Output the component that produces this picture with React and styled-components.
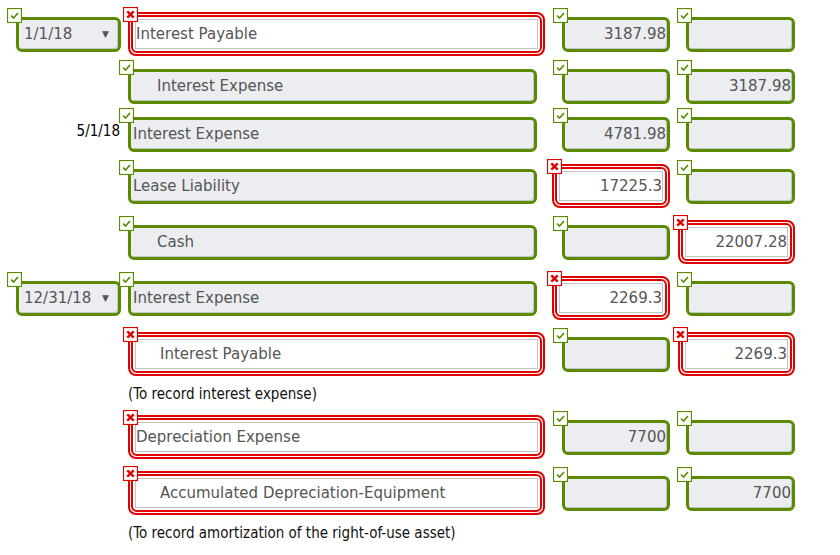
import React from 'react';
import styled, { createGlobalStyle } from 'styled-components';

const GREEN = '#5a8a00';
const RED = '#e10000';

const GlobalStyle = createGlobalStyle`
  body {
    margin: 0;
    background: #fff;
    font-family: "DejaVu Sans", Verdana, sans-serif;
  }
`;

const Sheet = styled.div`
  width: 840px;
  box-sizing: border-box;
  padding: 6px 0 0 16px;
`;

const Row = styled.div`
  display: grid;
  grid-template-columns: 105px 417px 118px 118px;
  column-gap: 7px;
  align-items: center;
  height: ${p => (p.$tall ? 56 : 48)}px;
`;

const Cell = styled.div`
  display: flex;
  align-items: center;
  justify-content: ${p => (p.$right ? 'flex-end' : 'flex-start')};
`;

const Slot = styled.div`
  position: relative;
  flex: none;
`;

const GoodBox = styled.div`
  box-sizing: border-box;
  width: ${p => p.$w}px;
  height: 35px;
  border: 3px solid ${GREEN};
  border-radius: 6px;
  background: #ebedf0;
  box-shadow: inset -1px -1px 0 #c4c6c9;
  display: flex;
  align-items: center;
  justify-content: ${p => (p.$right ? 'flex-end' : 'flex-start')};
  padding: ${p => (p.$right ? '0 1px 0 0' : `0 0 0 ${p.$indent ? 26 : 2}px`)};
`;

const BadOuter = styled.div`
  box-sizing: border-box;
  width: ${p => p.$w}px;
  height: 44px;
  border: 2px solid ${RED};
  border-radius: 8px;
  padding: 1px;
  background: #fff;
`;

const BadInner = styled.div`
  box-sizing: border-box;
  height: 100%;
  border: 2px solid ${RED};
  border-radius: 6px;
  padding: 2px;
  background: #fff;
`;

const BadBox = styled.div`
  box-sizing: border-box;
  height: 100%;
  border: 1px solid #c3c3c3;
  background: #fff;
  display: flex;
  align-items: center;
  justify-content: ${p => (p.$right ? 'flex-end' : 'flex-start')};
  padding: ${p => (p.$right ? '0' : `0 0 0 ${p.$indent ? 24 : 0}px`)};
`;

const Value = styled.span`
  font-size: 15px;
  color: #555;
  white-space: nowrap;
`;

const Mark = styled.svg`
  position: absolute;
  left: ${p => p.$off}px;
  top: ${p => p.$off}px;
  width: 15px;
  height: 15px;
  z-index: 1;
`;

const DateBox = styled.div`
  box-sizing: border-box;
  width: 105px;
  height: 35px;
  border: 3px solid ${GREEN};
  border-radius: 6px;
  background: #ebedf0;
  box-shadow: inset -1px -1px 0 #c4c6c9;
  display: flex;
  align-items: center;
  justify-content: space-between;
  padding: 0 9px 0 5px;
`;

const Arrow = styled.span`
  font-size: 9px;
  color: #555;
`;

const DateLabel = styled.span`
  font-family: "DejaVu Sans Condensed", "DejaVu Sans", sans-serif;
  font-size: 15px;
  color: #000;
  margin: 0 1px 6px 0;
`;

const Note = styled.div`
  height: 27px;
  padding: 0 0 4px 112px;
  box-sizing: border-box;
  display: flex;
  align-items: center;
  font-family: "DejaVu Sans Condensed", "DejaVu Sans", sans-serif;
  font-size: 15px;
  color: #111;
`;

const Check = ({ off }) => (
  <Mark $off={off} viewBox="0 0 15 15">
    <rect x="0.5" y="0.5" width="14" height="14" fill="#fff" stroke={GREEN} strokeWidth="1.2" />
    <polyline points="4,7.5 6.5,10 11,5" fill="none" stroke={GREEN} strokeWidth="1.6" />
  </Mark>
);

const Cross = ({ off }) => (
  <Mark $off={off} viewBox="0 0 15 15">
    <rect x="0.5" y="0.5" width="14" height="14" fill="#fff" stroke={RED} strokeWidth="1.2" />
    <path d="M4.3 4.3 L10.7 10.7 M10.7 4.3 L4.3 10.7" stroke={RED} strokeWidth="2.4" />
  </Mark>
);

const columns = [
  { good: 409, bad: 417, right: false },
  { good: 108, bad: 118, right: true },
  { good: 109, bad: 117, right: true },
];

const Field = ({ col, ok, text, indent }) => {
  const { good, bad, right } = columns[col];
  return (
    <Cell $right={right}>
      {ok ? (
        <Slot>
          <Check off={-9} />
          <GoodBox $w={good} $right={right} $indent={indent}>
            <Value>{text}</Value>
          </GoodBox>
        </Slot>
      ) : (
        <Slot>
          <Cross off={-5} />
          <BadOuter $w={bad}>
            <BadInner>
              <BadBox $right={right} $indent={indent}>
                <Value>{text}</Value>
              </BadBox>
            </BadInner>
          </BadOuter>
        </Slot>
      )}
    </Cell>
  );
};

const rows = [
  { date: { select: '1/1/18' }, acct: ['Interest Payable', false, false], dr: ['3187.98', true], cr: ['', true] },
  { acct: ['Interest Expense', true, true], dr: ['', true], cr: ['3187.98', true] },
  { date: { label: '5/1/18' }, acct: ['Interest Expense', true, false], dr: ['4781.98', true], cr: ['', true] },
  { acct: ['Lease Liability', true, false], dr: ['17225.3', false], cr: ['', true] },
  { acct: ['Cash', true, true], dr: ['', true], cr: ['22007.28', false] },
  { date: { select: '12/31/18' }, acct: ['Interest Expense', true, false], dr: ['2269.3', false], cr: ['', true] },
  { acct: ['Interest Payable', false, true], dr: ['', true], cr: ['2269.3', false] },
  { note: '(To record interest expense)' },
  { acct: ['Depreciation Expense', false, false], dr: ['7700', true], cr: ['', true] },
  { acct: ['Accumulated Depreciation-Equipment', false, true], dr: ['', true], cr: ['7700', true] },
  { note: '(To record amortization of the right-of-use asset)' },
];

const DateCell = ({ date }) => {
  if (!date) return <Cell />;
  if (date.label) {
    return (
      <Cell $right>
        <DateLabel>{date.label}</DateLabel>
      </Cell>
    );
  }
  return (
    <Cell>
      <Slot>
        <Check off={-9} />
        <DateBox>
          <Value>{date.select}</Value>
          <Arrow>▼</Arrow>
        </DateBox>
      </Slot>
    </Cell>
  );
};

export default function App() {
  return (
    <Sheet>
      <GlobalStyle />
      {rows.map((r, i) => {
        if (r.note) return <Note key={i}>{r.note}</Note>;
        const tall = !r.acct[1] || !r.dr[1] || !r.cr[1];
        return (
          <Row key={i} $tall={tall}>
            <DateCell date={r.date} />
            <Field col={0} text={r.acct[0]} ok={r.acct[1]} indent={r.acct[2]} />
            <Field col={1} text={r.dr[0]} ok={r.dr[1]} />
            <Field col={2} text={r.cr[0]} ok={r.cr[1]} />
          </Row>
        );
      })}
    </Sheet>
  );
}
